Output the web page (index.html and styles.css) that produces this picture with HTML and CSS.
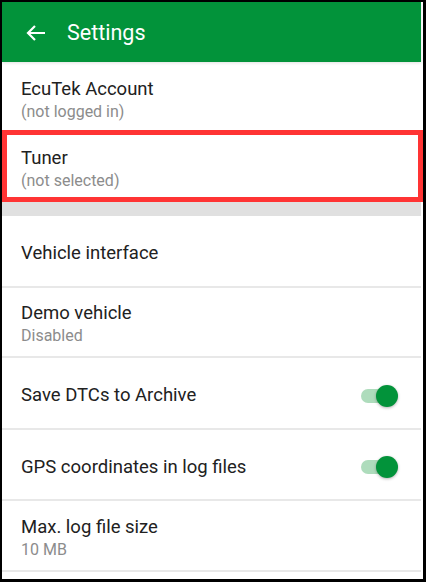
FILE: index.html
```html
<!DOCTYPE html>
<html lang="en">
<head>
  <meta charset="UTF-8">
  <meta name="viewport" content="width=device-width, initial-scale=1.0">
  <title>Settings</title>
  <link rel="stylesheet" href="styles.css">
</head>
<body>
  <div class="screen">
    <header class="app-bar">
      <svg class="back" width="22" height="18" viewBox="0 0 22 18">
        <path d="M3 9H20M10 2L3 9L10 16" fill="none" stroke="#fff" stroke-width="2.2"/>
      </svg>
      <div class="title">Settings</div>
    </header>

    <div class="row account">
      <div class="label">EcuTek Account</div>
      <div class="sub">(not logged in)</div>
    </div>
    <div class="row tuner highlight">
      <div class="label">Tuner</div>
      <div class="sub">(not selected)</div>
    </div>

    <div class="group-gap"></div>

    <div class="row line">
      <div class="label">Vehicle interface</div>
    </div>
    <div class="row line short">
      <div class="label">Demo vehicle</div>
      <div class="sub">Disabled</div>
    </div>
    <div class="row line switch-row">
      <div class="label">Save DTCs to Archive</div>
      <div class="switch"><span class="thumb"></span></div>
    </div>
    <div class="row line switch-row mid">
      <div class="label">GPS coordinates in log files</div>
      <div class="switch"><span class="thumb"></span></div>
    </div>
    <div class="row line mid">
      <div class="label">Max. log file size</div>
      <div class="sub">10 MB</div>
    </div>
  </div>
</body>
</html>
```

FILE: styles.css
```css
html, body {
  margin: 0;
  height: 100%;
}
body {
  background-color: #000;
  padding: 2px 3px 3px 2px;
  box-sizing: border-box;
  font-family: Roboto, 'Liberation Sans', sans-serif;
}
.screen {
  background-color: #fff;
  height: 100%;
  padding-right: 2px;
  box-sizing: border-box;
}
.app-bar {
  height: 60px;
  background-color: #02933a;
  display: flex;
  align-items: center;
  padding-left: 23px;
  box-shadow: 0 1px 3px rgba(0,0,0,0.12);
  position: relative;
}
.back {
  margin-top: 1px;
}
.title {
  color: #fff;
  font-size: 21.5px;
  margin-left: 20px;
  margin-top: 1px;
}
.row {
  display: flex;
  flex-direction: column;
  justify-content: center;
  padding: 5px 21px 0 19px;
  box-sizing: border-box;
  height: 72px;
}
.account {
  height: 68px;
  padding-top: 9px;
}
.tuner {
  padding-top: 7px;
}
.line {
  border-bottom: 2px solid #e8e8e8;
  height: 72px;
}
.short {
  height: 70px;
}
.mid {
  height: 71px;
}
.label {
  font-size: 18.5px;
  color: #212121;
  line-height: 23px;
}
.sub {
  font-size: 16px;
  color: #8c8c8c;
  line-height: 22px;
}
.highlight {
  position: relative;
}
.highlight::after {
  content: '';
  position: absolute;
  top: 0;
  left: 0;
  right: -2px;
  bottom: 0;
  border: 5px solid #ff3434;
}
.group-gap {
  height: 14px;
  background-color: #e0e0e0;
}
.switch-row {
  flex-direction: row;
  align-items: center;
  justify-content: space-between;
  padding-right: 26px;
}
.switch {
  width: 34px;
  height: 14px;
  border-radius: 7px;
  background-color: #aedcbc;
  position: relative;
}
.thumb {
  position: absolute;
  top: -4px;
  right: -3px;
  width: 22px;
  height: 22px;
  border-radius: 50%;
  background-color: #02933a;
  box-shadow: 0 1px 3px rgba(0,0,0,0.3);
}
```
